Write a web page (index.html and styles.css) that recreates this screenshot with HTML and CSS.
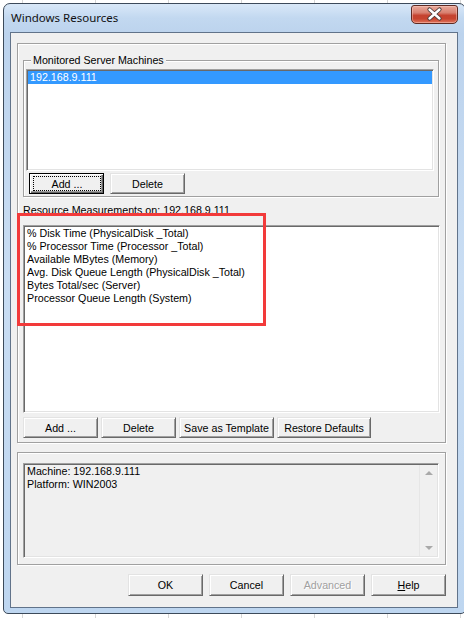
FILE: index.html
```html
<!DOCTYPE html>
<html>
<head>
<meta charset="utf-8">
<title>Windows Resources</title>
<link rel="stylesheet" href="styles.css">
</head>
<body>
<div class="window">
  <div class="titlebar">
    <span class="title">Windows Resources</span>
    <button class="close" aria-label="Close">
      <svg width="45" height="17" viewBox="0 0 45 17">
        <path d="M17.5 3.5 L27.5 12.5 M27.5 3.5 L17.5 12.5" stroke="#4a3a38" stroke-width="4.2" stroke-linecap="round" fill="none"/>
        <path d="M17.5 3.5 L27.5 12.5 M27.5 3.5 L17.5 12.5" stroke="#ffffff" stroke-width="2.4" stroke-linecap="round" fill="none"/>
      </svg>
    </button>
  </div>
  <div class="client">
    <div class="panel">
      <div class="group machines-group">
        <span class="legend">Monitored Server Machines</span>
        <div class="listbox machines">
          <div class="item selected">192.168.9.111</div>
        </div>
        <div class="btnrow machines-btns">
          <button class="btn default"><span class="focus">Add ...</span></button>
          <button class="btn">Delete</button>
        </div>
      </div>
      <div class="meas-label">Resource Measurements on: 192.168.9.111</div>
      <div class="listbox measures">
        <div class="item">% Disk Time (PhysicalDisk _Total)</div>
        <div class="item">% Processor Time (Processor _Total)</div>
        <div class="item">Available MBytes (Memory)</div>
        <div class="item">Avg. Disk Queue Length (PhysicalDisk _Total)</div>
        <div class="item">Bytes Total/sec (Server)</div>
        <div class="item">Processor Queue Length (System)</div>
      </div>
      <div class="btnrow measures-btns">
        <button class="btn">Add ...</button>
        <button class="btn">Delete</button>
        <button class="btn wide">Save as Template</button>
        <button class="btn wide2">Restore Defaults</button>
      </div>
      <div class="highlight"></div>
    </div>
    <div class="group info-group">
      <div class="textarea">
        <div class="lines">
          <div>Machine: 192.168.9.111</div>
          <div>Platform: WIN2003</div>
        </div>
        <div class="scrollbar">
          <span class="arrow up"></span>
          <span class="arrow down"></span>
        </div>
      </div>
    </div>
    <div class="dlg-buttons">
      <button class="btn dlg">OK</button>
      <button class="btn dlg">Cancel</button>
      <button class="btn dlg disabled">Advanced</button>
      <button class="btn dlg"><u>H</u>elp</button>
    </div>
  </div>
</div>
</body>
</html>
```

FILE: styles.css
```css
html, body {
  margin: 0;
  padding: 0;
}
body {
  width: 464px;
  height: 618px;
  overflow: hidden;
  background-color: #ffffff;
  background-image: repeating-linear-gradient(to right, transparent 0, transparent 22px, #d6d6d6 22px, #d6d6d6 23px, transparent 23px, transparent 73px);
  font-family: "Liberation Sans", Arial, sans-serif;
  font-size: 10.7px;
  color: #000;
}

.window {
  box-sizing: border-box;
  margin: 3px 0 0 3px;
  width: 463px;
  height: 611px;
  border: 1px solid #3c4a5a;
  border-radius: 7px 7px 5px 5px;
  padding: 0 6px 5px 6px;
  background: linear-gradient(to bottom, #d9e8f8 0, #c2d8f0 14px, #bcd3ed 30px, #c9ddf3 45%, #bed6f0 100%);
  display: flex;
  flex-direction: column;
}

.titlebar {
  height: 28px;
  display: flex;
  align-items: flex-start;
  flex: none;
}
.title {
  font-family: "Noto Sans", "Open Sans", sans-serif;
  font-size: 11.5px;
  line-height: 16px;
  margin: 6px 0 0 1px;
  color: #111;
}
.close {
  margin: 1px 1px 0 auto;
  width: 47px;
  height: 19px;
  padding: 0;
  border: 1px solid #5e2a22;
  border-radius: 3px 3px 5px 5px;
  background: linear-gradient(to bottom, #e9a99b 0, #d88070 40%, #c54330 55%, #c7442f 75%, #e0755e 100%);
  box-shadow: inset 0 0 0 1px rgba(255, 210, 200, 0.45);
  display: flex;
  align-items: center;
  justify-content: center;
}
.close svg {
  display: block;
}

.client {
  flex: 1;
  width: 448px;
  box-sizing: border-box;
  border: 1px solid #61738a;
  background: #f0f0f0;
}

.panel {
  position: relative;
  box-sizing: border-box;
  margin: 10px 0 0 6px;
  width: 429px;
  height: 400px;
  border: 1px solid #a0a0a0;
  box-shadow: inset 1px 1px 0 #fff, 1px 1px 0 #fff;
}

.group {
  box-sizing: border-box;
  border: 1px solid #a0a0a0;
  box-shadow: inset 1px 1px 0 #fff, 1px 1px 0 #fff;
}
.machines-group {
  margin: 16px 0 0 5px;
  width: 416px;
  height: 137px;
  padding: 0 0 2px 0;
}
.legend {
  display: block;
  width: max-content;
  height: 13px;
  line-height: 13px;
  margin: -7px 0 0 7px;
  padding: 0 2px;
  background: #f0f0f0;
}

.listbox {
  box-sizing: border-box;
  background: #fff;
  border-style: solid;
  border-width: 1px;
  border-color: #a0a0a0 #fff #fff #a0a0a0;
  box-shadow: inset 1px 1px 0 #696969, inset -1px -1px 0 #e3e3e3;
  padding: 1px;
}
.item {
  height: 13px;
  line-height: 13px;
  padding-left: 2px;
  white-space: nowrap;
}
.item.selected {
  background: #3399ff;
  color: #fff;
}
.machines {
  margin: 2px 0 0 2px;
  width: 408px;
  height: 102px;
}
.measures {
  margin: 8px 0 0 5px;
  width: 417px;
  height: 188px;
}

.btnrow {
  display: flex;
}
.machines-btns {
  margin: 2px 0 0 5px;
  gap: 6px;
}
.measures-btns {
  margin: 4px 0 0 5px;
  gap: 3px;
}

.btn {
  box-sizing: border-box;
  width: 75px;
  height: 21px;
  padding: 0;
  margin: 0;
  font-family: "Liberation Sans", Arial, sans-serif;
  font-size: 10.7px;
  color: #000;
  background: #f0f0f0;
  border-style: solid;
  border-width: 1px;
  border-color: #e3e3e3 #696969 #696969 #e3e3e3;
  box-shadow: inset 1px 1px 0 #fff, inset -1px -1px 0 #a0a0a0;
  display: flex;
  align-items: center;
  justify-content: center;
}
.btn.wide {
  width: 95px;
}
.btn.wide2 {
  width: 94px;
}
.btn.default {
  border: 1px solid #000;
  box-shadow: inset 1px 1px 0 #fff, inset -1px -1px 0 #696969, inset -2px -2px 0 #a0a0a0;
  align-items: stretch;
}
.focus {
  flex: 1;
  margin: 2px 2px 2px 3px;
  border: 1px dotted #000;
  display: flex;
  align-items: center;
  justify-content: center;
}

.meas-label {
  margin: 7px 0 0 5px;
  height: 13px;
  line-height: 13px;
}

.highlight {
  position: absolute;
  left: -1px;
  top: 169px;
  width: 249px;
  height: 113px;
  box-sizing: border-box;
  border: 3px solid #f23a3a;
}

.info-group {
  margin: 9px 0 0 6px;
  width: 429px;
  height: 113px;
  padding: 10px 0 0 5px;
}
.textarea {
  box-sizing: border-box;
  width: 416px;
  height: 95px;
  border-style: solid;
  border-width: 1px;
  border-color: #a0a0a0 #fff #fff #a0a0a0;
  box-shadow: inset 1px 1px 0 #696969, inset -1px -1px 0 #e3e3e3;
  padding: 1px;
  background: #f0f0f0;
  display: flex;
}
.lines {
  flex: 1;
  padding: 0 0 0 2px;
  line-height: 13px;
}
.scrollbar {
  width: 17px;
  border-left: 1px solid #e6e6e6;
  display: flex;
  flex-direction: column;
  justify-content: space-between;
  align-items: center;
  padding: 6px 0 6px 0;
}
.arrow {
  width: 0;
  height: 0;
  border-left: 4px solid transparent;
  border-right: 4px solid transparent;
}
.arrow.up {
  border-bottom: 4px solid #a9a9a9;
}
.arrow.down {
  border-top: 4px solid #a9a9a9;
}

.dlg-buttons {
  display: flex;
  gap: 6px;
  margin: 9px 0 0 117px;
}
.btn.dlg {
  height: 22px;
}
.btn.disabled {
  color: #a0a0a0;
  text-shadow: 1px 1px 0 #fff;
}
```
